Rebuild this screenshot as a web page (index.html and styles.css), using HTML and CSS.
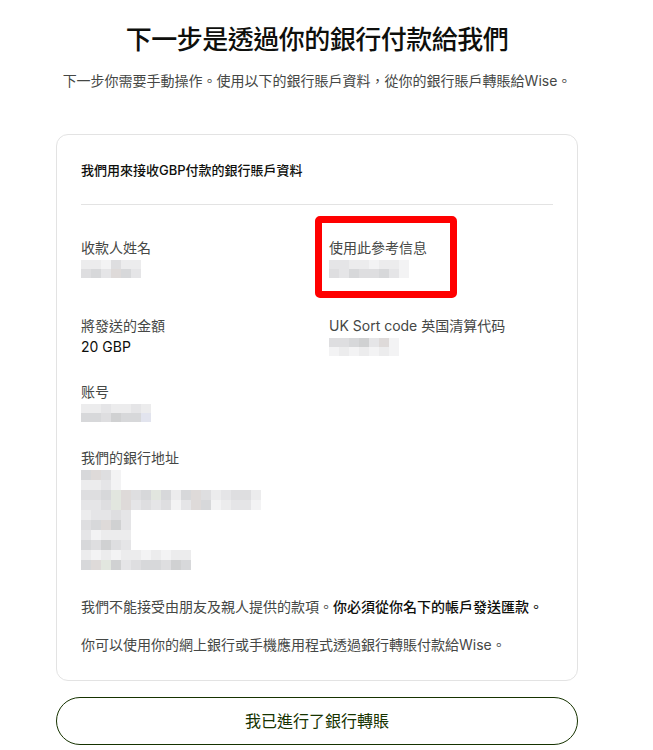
FILE: index.html
```html
<!DOCTYPE html>
<html lang="zh-Hant">
<head>
<meta charset="utf-8">
<title>下一步是透過你的銀行付款給我們</title>
<link rel="stylesheet" href="styles.css">
</head>
<body>
<main class="page">
  <h1 class="title">下一步是透過你的銀行付款給我們</h1>
  <p class="lead">下一步你需要手動操作。使用以下的銀行賬戶資料，從你的銀行賬戶轉賬給Wise。</p>

  <section class="card">
    <h2 class="card-title">我們用來接收GBP付款的銀行賬戶資料</h2>
    <hr class="divider">

    <dl class="fields">
      <div class="field tall">
        <dt>收款人姓名</dt>
        <dd>
          <span class="mosaic">
            <span class="mrow"><i class="b"></i><i class="b"></i><i class="a"></i><i class="d"></i><i class="b"></i><i class="b"></i></span>
            <span class="mrow"><i class="d"></i><i class="e"></i><i class="c"></i><i class="g"></i><i class="e"></i><i class="c"></i></span>
          </span>
        </dd>
      </div>
      <div class="field tall">
        <dt>使用此參考信息</dt>
        <dd>
          <span class="mosaic">
            <span class="mrow"><i class="c"></i><i class="c"></i><i class="b"></i><i class="b"></i><i class="a"></i><i class="b"></i><i class="b"></i><i class="a"></i></span>
            <span class="mrow"><i class="d"></i><i class="c"></i><i class="e"></i><i class="d"></i><i class="d"></i><i class="e"></i><i class="c"></i><i class="a"></i></span>
          </span>
        </dd>
        <span class="highlight"></span>
      </div>

      <div class="field">
        <dt>將發送的金額</dt>
        <dd>20 GBP</dd>
      </div>
      <div class="field">
        <dt>UK Sort code 英国清算代码</dt>
        <dd>
          <span class="mosaic">
            <span class="mrow"><i class="d"></i><i class="d"></i><i class="e"></i><i class="f"></i><i class="c"></i><i class="g"></i><i class="a"></i></span>
            <span class="mrow"><i class="a"></i><i class="b"></i><i class="a"></i><i class="b"></i><i class="a"></i><i class="b"></i><i class="a"></i></span>
          </span>
        </dd>
      </div>

      <div class="field">
        <dt>账号</dt>
        <dd>
          <span class="mosaic">
            <span class="mrow"><i class="b"></i><i class="b"></i><i class="c"></i><i class="b"></i><i class="b"></i><i class="c"></i><i class="b"></i></span>
            <span class="mrow"><i class="e"></i><i class="e"></i><i class="d"></i><i class="f"></i><i class="e"></i><i class="e"></i><i class="k"></i></span>
          </span>
        </dd>
      </div>
      <div class="field"></div>

      <div class="field wide">
        <dt>我們的銀行地址</dt>
        <dd class="block">
          <span class="mosaic big">
            <span class="mrow"><i class="e"></i><i class="g"></i><i class="d"></i><i class="a"></i></span>
            <span class="mrow"><i class="b"></i><i class="b"></i><i class="c"></i><i class="a"></i></span>
            <span class="mrow"><i class="d"></i><i class="d"></i><i class="e"></i><i class="h"></i><i class="g"></i><i class="d"></i><i class="e"></i><i class="h"></i><i class="e"></i><i class="b"></i><i class="e"></i><i class="g"></i><i class="d"></i><i class="b"></i><i class="c"></i><i class="d"></i><i class="d"></i><i class="b"></i></span>
            <span class="mrow"><i class="c"></i><i class="c"></i><i class="d"></i><i class="h"></i><i class="g"></i><i class="c"></i><i class="d"></i><i class="c"></i><i class="d"></i><i class="a"></i><i class="c"></i><i class="g"></i><i class="e"></i><i class="a"></i><i class="b"></i><i class="c"></i><i class="c"></i><i class="a"></i></span>
            <span class="mrow"><i class="b"></i><i class="c"></i><i class="c"></i><i class="d"></i><i class="c"></i></span>
            <span class="mrow"><i class="d"></i><i class="e"></i><i class="g"></i><i class="f"></i><i class="c"></i></span>
            <span class="mrow"><i class="c"></i><i class="a"></i><i class="b"></i><i class="b"></i><i class="b"></i></span>
            <span class="mrow"><i class="e"></i><i class="d"></i><i class="f"></i><i class="d"></i><i class="c"></i></span>
            <span class="mrow"><i class="b"></i><i class="a"></i><i class="b"></i><i class="a"></i><i class="b"></i><i class="b"></i><i class="a"></i><i class="b"></i><i class="a"></i><i class="b"></i><i class="b"></i></span>
            <span class="mrow"><i class="e"></i><i class="g"></i><i class="h"></i><i class="f"></i><i class="c"></i><i class="d"></i><i class="e"></i><i class="e"></i><i class="d"></i><i class="f"></i><i class="e"></i></span>
          </span>
        </dd>
      </div>
    </dl>

    <div class="notes">
      <p>我們不能接受由朋友及親人提供的款項。<strong>你必須從你名下的帳戶發送匯款。</strong></p>
      <p>你可以使用你的網上銀行或手機應用程式透過銀行轉賬付款給Wise。</p>
    </div>
  </section>

  <button class="btn" type="button">我已進行了銀行轉賬</button>
</main>
</body>
</html>
```

FILE: styles.css
```css
* {
  box-sizing: border-box;
}

body {
  margin: 0;
  background: #ffffff;
  color: #0e0f0c;
  font-family: Inter, "Noto Sans CJK TC", "Noto Sans", sans-serif;
}

.page {
  width: 522px;
  margin-left: 56px;
  padding-top: 23px;
}

.title {
  margin: 0;
  font-size: 26px;
  line-height: 34px;
  font-weight: 500;
  letter-spacing: -0.5px;
  text-align: center;
  color: #0e0f0c;
}

.lead {
  margin: 14px 0 0;
  font-size: 14px;
  line-height: 20px;
  color: #454745;
  text-align: center;
}

.card {
  margin-top: 43px;
  border: 1px solid #e3e3e3;
  border-radius: 12px;
  padding: 25px 24px 24px;
}

.card-title {
  margin: 0;
  font-size: 13px;
  line-height: 20px;
  font-weight: 500;
  color: #0e0f0c;
}

.divider {
  margin: 24px 0 0;
  height: 0;
  border: 0;
  border-top: 1px solid #e3e3e3;
}

.fields {
  margin: 33px 0 0;
  display: grid;
  grid-template-columns: 224px 224px;
  column-gap: 24px;
  row-gap: 24px;
}

.field {
  position: relative;
}

.field.tall {
  padding-bottom: 12px;
}

.field.wide {
  grid-column: 1 / span 2;
}

.field dt {
  font-size: 14px;
  line-height: 20px;
  color: #454745;
}

.field dd {
  margin: 0;
  height: 22px;
  display: flex;
  align-items: center;
  font-size: 14px;
  line-height: 22px;
  color: #0e0f0c;
}

.field dd.block {
  height: auto;
  display: block;
  margin-top: 2px;
}

.mosaic {
  display: flex;
  flex-direction: column;
}

.mrow {
  display: flex;
}

.mrow i {
  display: block;
  width: 10px;
  height: 9px;
}

.mosaic.big .mrow i {
  height: 10px;
}

.mrow .a { background: #f3f3f4; }
.mrow .b { background: #ececed; }
.mrow .c { background: #e5e5e7; }
.mrow .d { background: #dedee0; }
.mrow .e { background: #d7d8da; }
.mrow .f { background: #d0d1d2; }
.mrow .g { background: #dedad9; }
.mrow .h { background: #e2e6df; }
.mrow .k { background: #e2e4ee; }

.highlight {
  position: absolute;
  left: -14px;
  top: -22px;
  width: 142px;
  height: 82px;
  border: 7px solid #ff0000;
  border-radius: 5px;
}

.notes p {
  margin: 16px 0 0;
  font-size: 14px;
  line-height: 22px;
  color: #454745;
}

.notes p:first-child {
  margin-top: 26px;
}

.notes strong {
  font-weight: 500;
  color: #0e0f0c;
}

.btn {
  display: block;
  width: 100%;
  height: 48px;
  margin-top: 16px;
  padding: 0;
  background: #ffffff;
  border: 1px solid #163300;
  border-radius: 24px;
  color: #163300;
  font-family: Inter, "Noto Sans CJK TC", "Noto Sans", sans-serif;
  font-size: 16px;
  line-height: 22px;
  font-weight: 400;
}
```
